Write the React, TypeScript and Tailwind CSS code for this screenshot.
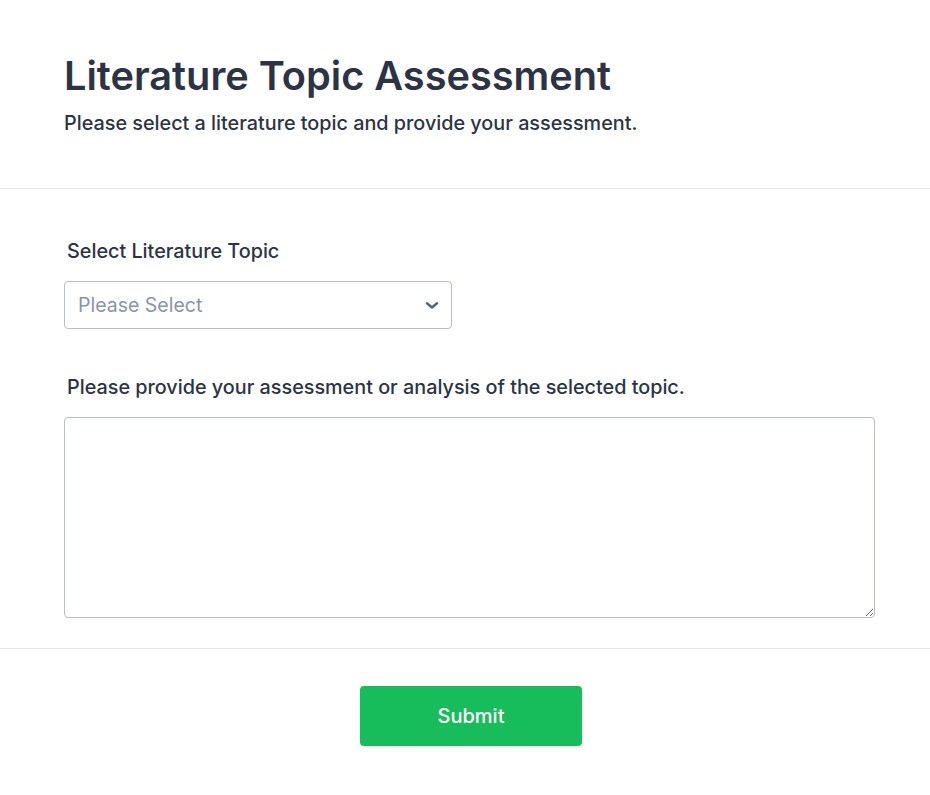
import React from 'react';

export default function App() {
  return (
    <div className="min-h-screen bg-white text-[#2c3345] font-['Inter','Liberation_Sans',sans-serif]">
      {/* Header */}
      <div className="px-16 pt-[52px] pb-[51px] border-b border-[#e3e5f1]">
        <h1 className="text-[39.7px] leading-[48px] font-semibold">
          Literature Topic Assessment
        </h1>
        <p className="text-[19.8px] leading-[28px] font-medium mt-[9px]">
          Please select a literature topic and provide your assessment.
        </p>
      </div>

      {/* Form */}
      <div className="px-16 pt-[48px] pb-[30px] border-b border-[#e3e5f1]">
        <label className="block pl-[3px] text-[19.8px] leading-[28px] font-medium mb-[16px]">
          Select Literature Topic
        </label>
        <div className="relative w-[388px] h-[48px] border border-[#b8bdc9] rounded-[4px] flex items-center px-[13px]">
          <span className="text-[19.5px] text-[#8894ab] translate-y-[1px]">Please Select</span>
          <svg
            className="absolute right-[9px] top-1/2 -translate-y-1/2"
            width="20"
            height="20"
            viewBox="0 0 24 24"
            fill="none"
            stroke="#57647e"
            strokeWidth="3"
            strokeLinecap="round"
            strokeLinejoin="round"
          >
            <path d="M6 10l6 5 6-5" />
          </svg>
        </div>

        <label className="block pl-[3px] text-[19.8px] leading-[28px] font-medium mt-[44px] mb-[16px]">
          Please provide your assessment or analysis of the selected topic.
        </label>
        <textarea className="block w-[811px] h-[201px] border border-[#b8bdc9] rounded-[4px] outline-none" />
      </div>

      {/* Footer */}
      <div className="flex justify-center pt-[37px] pl-[12px]">
        <button className="w-[222px] h-[60px] bg-[#18bd5b] rounded-[4px] text-white text-[20px] font-medium">
          Submit
        </button>
      </div>
    </div>
  );
}
